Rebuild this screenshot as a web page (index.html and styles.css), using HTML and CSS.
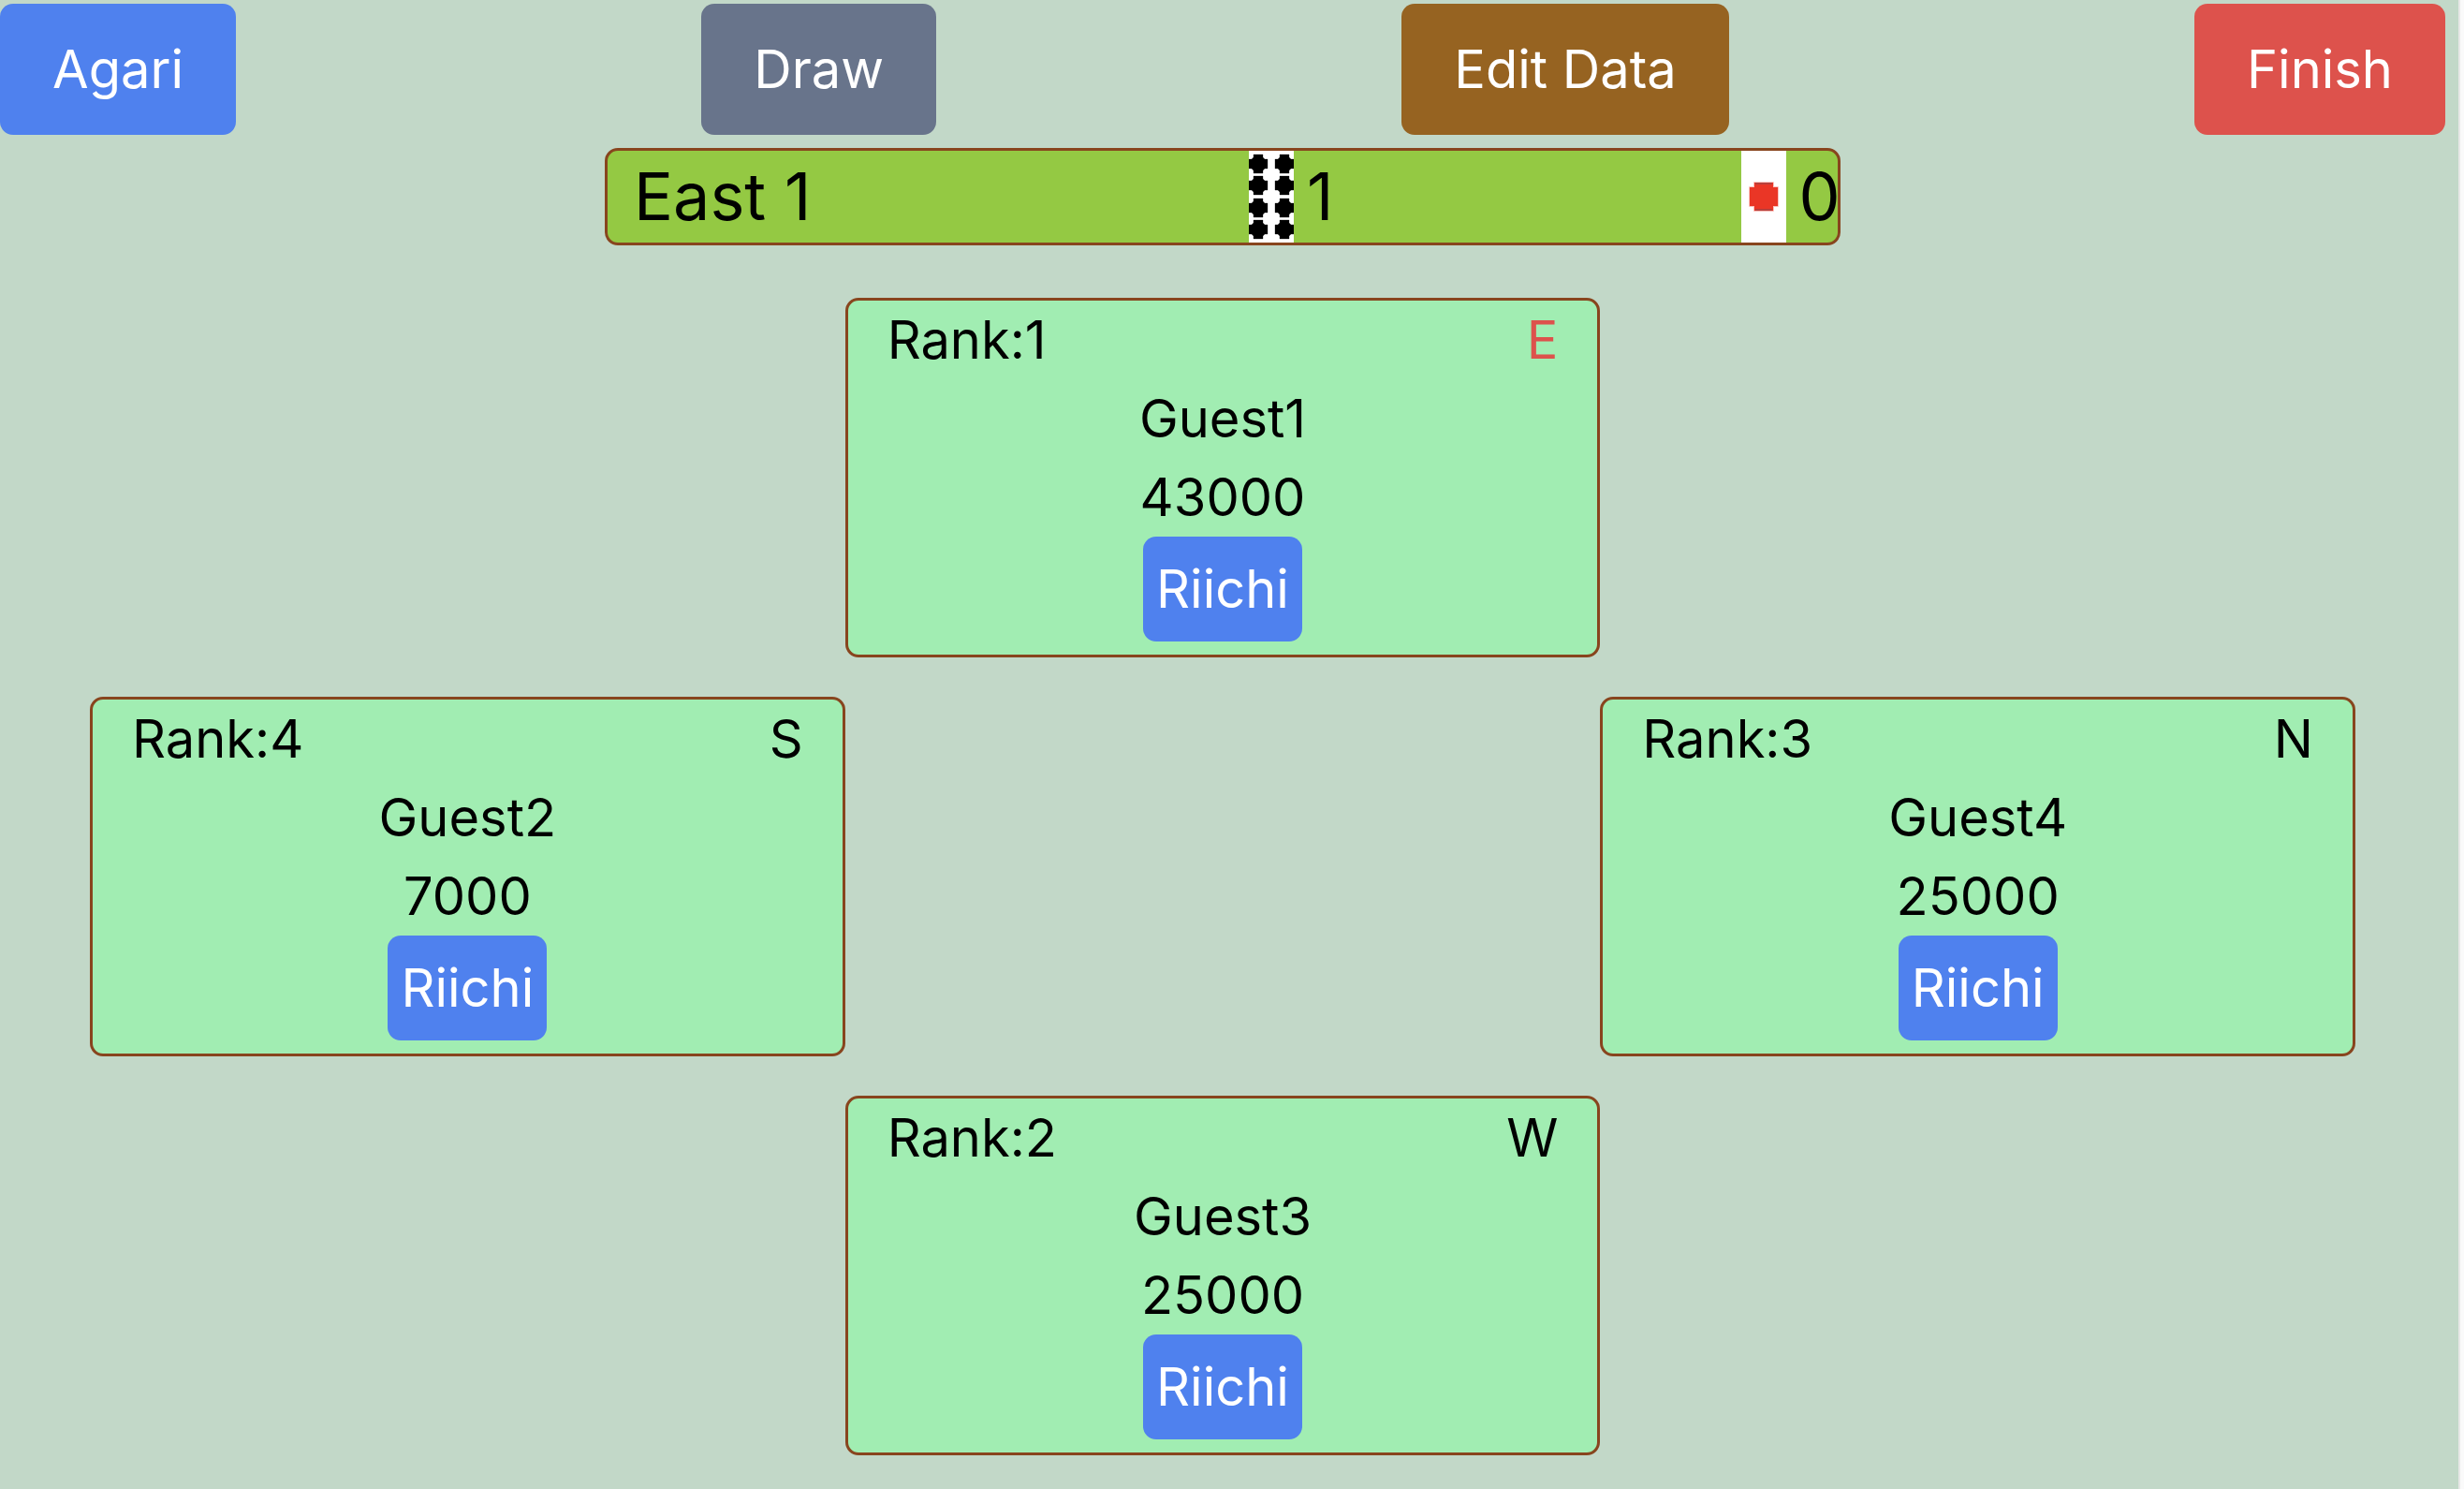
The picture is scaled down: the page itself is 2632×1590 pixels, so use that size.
FILE: index.html
```html
<!DOCTYPE html>
<html lang="en">
<head>
<meta charset="utf-8">
<title>Mahjong Score</title>
<link rel="stylesheet" href="styles.css">
</head>
<body>
<main class="game">
<nav class="actions">
<button class="btn btn-blue" type="button">Agari</button>
<button class="btn btn-slate" type="button">Draw</button>
<button class="btn btn-brown" type="button">Edit Data</button>
<button class="btn btn-red" type="button">Finish</button>
</nav>
<section class="round">
<span class="round-name">East 1</span>
<span class="stick-count stick-count-hundred">
<svg class="stick" viewBox="0 0 48 98" aria-hidden="true">
<defs><path id="pip" d="M-5-10H5V-7L7-5H10V5H7L5 7V10H-5V7L-7 5H-10V-5H-7L-5-7Z" stroke="#000" stroke-opacity=".3" stroke-width="1"/></defs>
<rect width="48" height="98" fill="#fff"/>
<use href="#pip" x="10" y="14"/><use href="#pip" x="38" y="14"/>
<use href="#pip" x="10" y="37"/><use href="#pip" x="38" y="37"/>
<use href="#pip" x="10" y="61"/><use href="#pip" x="38" y="61"/>
<use href="#pip" x="10" y="84"/><use href="#pip" x="38" y="84"/>
</svg>
<span>1</span>
</span>
<span class="stick-count">
<svg class="stick" viewBox="0 0 48 98" aria-hidden="true">
<rect width="48" height="98" fill="#fff"/>
<path d="M14 34H34V39H39V59H34V64H14V59H9V39H14Z" fill="#ea3626" stroke="#ea3626" stroke-opacity=".3" stroke-width="2" stroke-linejoin="round"/>
<path d="M15 35H33M15 63H33" stroke="#b8403c" stroke-width="2"/>
</svg>
<span>0</span>
</span>
</section>
<section class="table">
<article class="player seat-top">
<header class="player-head"><span>Rank:1</span><span class="dealer">E</span></header>
<p>Guest1</p><p>43000</p>
<button class="riichi" type="button">Riichi</button>
</article>
<article class="player seat-left">
<header class="player-head"><span>Rank:4</span><span>S</span></header>
<p>Guest2</p><p>7000</p>
<button class="riichi" type="button">Riichi</button>
</article>
<article class="player seat-right">
<header class="player-head"><span>Rank:3</span><span>N</span></header>
<p>Guest4</p><p>25000</p>
<button class="riichi" type="button">Riichi</button>
</article>
<article class="player seat-bottom">
<header class="player-head"><span>Rank:2</span><span>W</span></header>
<p>Guest3</p><p>25000</p>
<button class="riichi" type="button">Riichi</button>
</article>
</section>
</main>
</body>
</html>
```
FILE: styles.css
```css
* { box-sizing: border-box; margin: 0; }
body { padding-right: 4px; background: #fafafa; color: #000; font: 56px/84px Inter, sans-serif; }
button { border: 0; color: #fff; font: inherit; }
.game { min-height: 100vh; padding: 4px 14px 0 0; border-right: 2px solid #e8e8e8; background: #c2d8c8; }
.actions { display: flex; justify-content: space-between; }
.btn { padding: 28px 56px; border-radius: 14px; }
.btn-blue, .riichi { background: #4f81ee; }
.btn-slate { background: #68748b; }
.btn-brown { background: #966321; }
.btn-red { background: #dd524c; }
.round { display: flex; width: calc(50% + 14px); margin: 14px auto 0; border: 3px solid #88451e; border-radius: 14px; background: #94c943; font-size: 70px; line-height: 98px; }
.round-name { flex: 0 0 50%; margin-left: 28px; }
.stick-count { display: flex; gap: 14px; }
.stick-count-hundred { flex: 0 0 40%; }
.stick { flex: none; width: 48px; height: 98px; }
.table { display: grid; grid-template-columns: repeat(3, 1fr); row-gap: 42px; padding: 56px 96px 0; }
.player { display: flex; flex-direction: column; align-items: center; border: 3px solid #88451e; border-radius: 14px; background: #a1edb2; padding-bottom: 14px; }
.player-head { display: flex; justify-content: space-between; align-self: stretch; padding: 0 42px; }
.dealer { color: #dd524c; }
.riichi { padding: 14px; border-radius: 14px; }
.seat-top { grid-area: 1 / 2; }
.seat-left { grid-area: 2 / 1; }
.seat-right { grid-area: 2 / 3; }
.seat-bottom { grid-area: 3 / 2; }
```
